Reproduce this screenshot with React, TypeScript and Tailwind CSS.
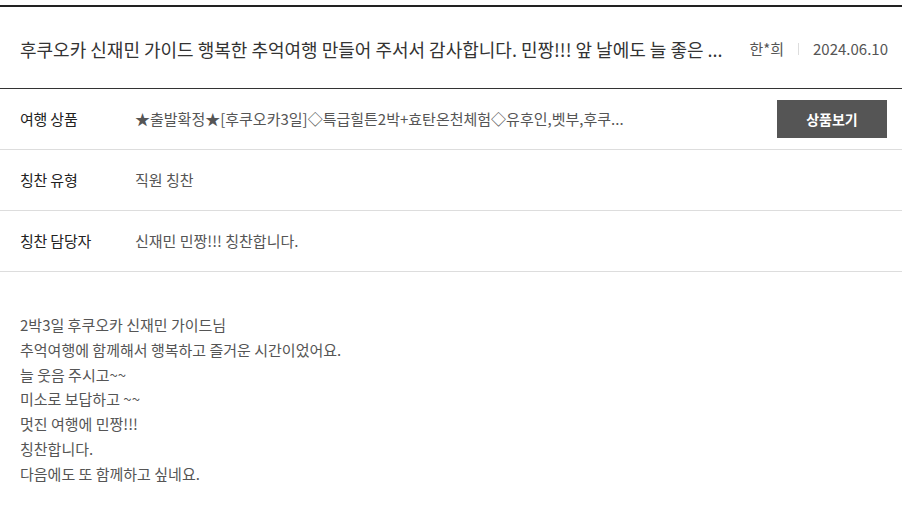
import React from 'react';

const rows = [
  { label: '여행 상품', value: '★출발확정★[후쿠오카3일]◇특급힐튼2박+효탄온천체험◇유후인,벳부,후쿠...', button: true },
  { label: '칭찬 유형', value: '직원 칭찬' },
  { label: '칭찬 담당자', value: '신재민 민짱!!! 칭찬합니다.' },
];

const body = [
  '2박3일 후쿠오카 신재민 가이드님',
  '추억여행에 함께해서 행복하고 즐거운 시간이었어요.',
  '늘 웃음 주시고~~',
  '미소로 보답하고 ~~',
  '멋진 여행에 민짱!!!',
  '칭찬합니다.',
  '다음에도 또 함께하고 싶네요.',
];

export default function App() {
  return (
    <div className="bg-white pt-[5px] font-['Noto_Sans_CJK_KR',sans-serif]">
      <div className="border-t-2 border-[#222]">
        <div className="flex h-[82px] items-center border-b border-[#333] pl-5 pr-[14px] pt-[3px]">
          <h3 className="min-w-0 flex-1 truncate text-[18px] font-normal text-[#333]">
            후쿠오카 신재민 가이드 행복한 추억여행 만들어 주서서 감사합니다. 민짱!!! 앞 날에도 늘 좋은 ...
          </h3>
          <span className="ml-[26px] text-[15px] text-[#555]">한*희</span>
          <span className="mx-[14px] h-3 w-px bg-[#ddd]" />
          <span className="text-[15px] text-[#555]">2024.06.10</span>
        </div>

        {rows.map((r) => (
          <div key={r.label} className="flex h-[61px] items-center border-b border-[#ddd] pl-5 pr-[15px] text-[15px]">
            <div className="w-[115px] shrink-0 tracking-[-0.2px] text-[#222]">{r.label}</div>
            <div className="min-w-0 truncate text-[#555]">{r.value}</div>
            {r.button && (
              <button className="ml-auto h-[38px] w-[110px] shrink-0 bg-[#555] text-[14px] font-bold text-white">
                상품보기
              </button>
            )}
          </div>
        ))}

        <div className="px-5 pt-[41px] text-[15px] leading-[24.8px] text-[#555]">
          {body.map((line, i) => (
            <p key={i}>{line}</p>
          ))}
        </div>
      </div>
    </div>
  );
}
